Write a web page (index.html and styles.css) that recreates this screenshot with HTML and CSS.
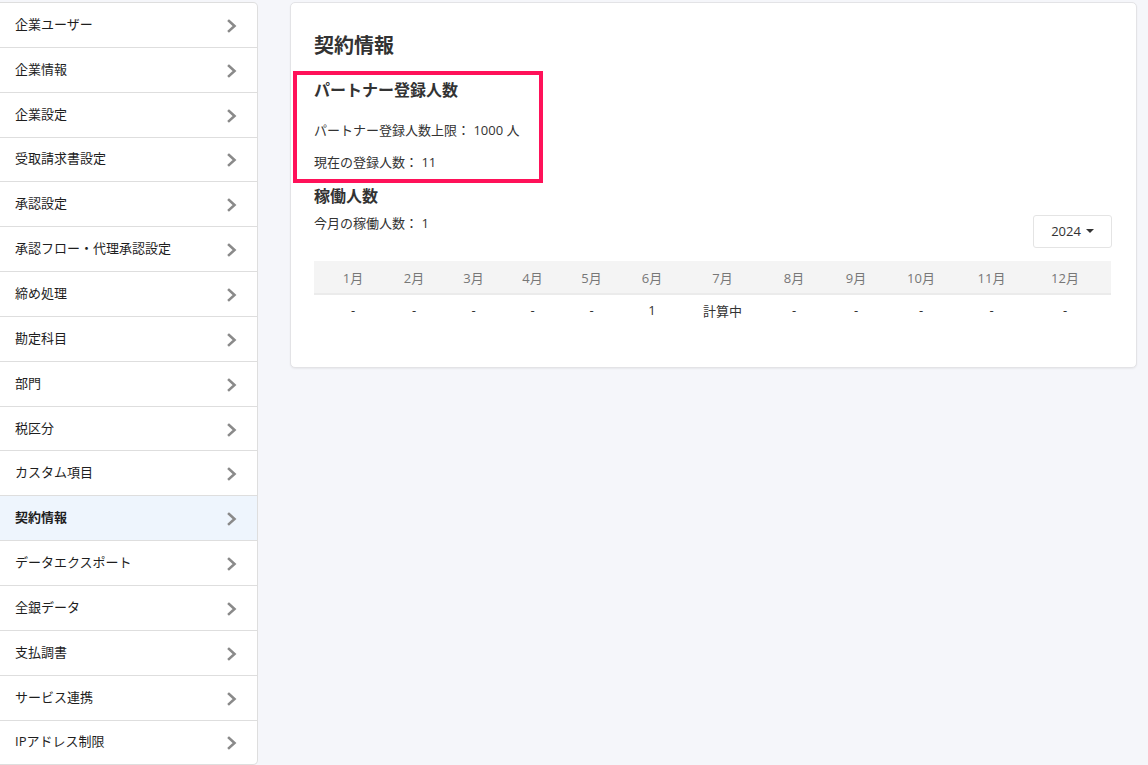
FILE: index.html
```html
<!DOCTYPE html>
<html lang="ja">
<head>
<meta charset="utf-8">
<title>契約情報</title>
<link rel="stylesheet" href="styles.css">
</head>
<body>
<div class="layout">
  <nav class="sidebar">
    <a class="nav-item"><span>企業ユーザー</span><svg class="chev" viewBox="0 0 10 14"><polyline points="2,2 7.5,7 2,12"/></svg></a>
    <a class="nav-item"><span>企業情報</span><svg class="chev" viewBox="0 0 10 14"><polyline points="2,2 7.5,7 2,12"/></svg></a>
    <a class="nav-item"><span>企業設定</span><svg class="chev" viewBox="0 0 10 14"><polyline points="2,2 7.5,7 2,12"/></svg></a>
    <a class="nav-item"><span>受取請求書設定</span><svg class="chev" viewBox="0 0 10 14"><polyline points="2,2 7.5,7 2,12"/></svg></a>
    <a class="nav-item"><span>承認設定</span><svg class="chev" viewBox="0 0 10 14"><polyline points="2,2 7.5,7 2,12"/></svg></a>
    <a class="nav-item"><span>承認フロー・代理承認設定</span><svg class="chev" viewBox="0 0 10 14"><polyline points="2,2 7.5,7 2,12"/></svg></a>
    <a class="nav-item"><span>締め処理</span><svg class="chev" viewBox="0 0 10 14"><polyline points="2,2 7.5,7 2,12"/></svg></a>
    <a class="nav-item"><span>勘定科目</span><svg class="chev" viewBox="0 0 10 14"><polyline points="2,2 7.5,7 2,12"/></svg></a>
    <a class="nav-item"><span>部門</span><svg class="chev" viewBox="0 0 10 14"><polyline points="2,2 7.5,7 2,12"/></svg></a>
    <a class="nav-item"><span>税区分</span><svg class="chev" viewBox="0 0 10 14"><polyline points="2,2 7.5,7 2,12"/></svg></a>
    <a class="nav-item"><span>カスタム項目</span><svg class="chev" viewBox="0 0 10 14"><polyline points="2,2 7.5,7 2,12"/></svg></a>
    <a class="nav-item active"><span>契約情報</span><svg class="chev" viewBox="0 0 10 14"><polyline points="2,2 7.5,7 2,12"/></svg></a>
    <a class="nav-item"><span>データエクスポート</span><svg class="chev" viewBox="0 0 10 14"><polyline points="2,2 7.5,7 2,12"/></svg></a>
    <a class="nav-item"><span>全銀データ</span><svg class="chev" viewBox="0 0 10 14"><polyline points="2,2 7.5,7 2,12"/></svg></a>
    <a class="nav-item"><span>支払調書</span><svg class="chev" viewBox="0 0 10 14"><polyline points="2,2 7.5,7 2,12"/></svg></a>
    <a class="nav-item"><span>サービス連携</span><svg class="chev" viewBox="0 0 10 14"><polyline points="2,2 7.5,7 2,12"/></svg></a>
    <a class="nav-item"><span>IPアドレス制限</span><svg class="chev" viewBox="0 0 10 14"><polyline points="2,2 7.5,7 2,12"/></svg></a>
  </nav>

  <main class="card">
    <h1 class="title">契約情報</h1>
    <section class="partner">
      <h2 class="subtitle">パートナー登録人数</h2>
      <p class="line first">パートナー登録人数上限： 1000 人</p>
      <p class="line second">現在の登録人数： 11</p>
      <div class="highlight"></div>
    </section>
    <section class="active-users">
      <h2 class="subtitle">稼働人数</h2>
      <div class="toolbar">
        <p class="line">今月の稼働人数： 1</p>
        <button class="year-select">2024 <span class="caret"></span></button>
      </div>
      <table class="months">
        <thead>
          <tr><th>1月</th><th>2月</th><th>3月</th><th>4月</th><th>5月</th><th>6月</th><th>7月</th><th>8月</th><th>9月</th><th>10月</th><th>11月</th><th>12月</th></tr>
        </thead>
        <tbody>
          <tr><td>-</td><td>-</td><td>-</td><td>-</td><td>-</td><td>1</td><td>計算中</td><td>-</td><td>-</td><td>-</td><td>-</td><td>-</td></tr>
        </tbody>
      </table>
    </section>
  </main>
</div>
</body>
</html>
```

FILE: styles.css
```css
* { box-sizing: border-box; }

html, body {
  margin: 0;
  padding: 0;
  background: #f5f6fa;
  font-family: "Open Sans", "Noto Sans CJK JP", "Noto Sans", sans-serif;
  color: #333;
}

.layout {
  display: flex;
  align-items: flex-start;
  gap: 32px;
  padding-top: 2px;
}

.sidebar {
  width: 258px;
  flex: none;
  background: #fff;
  border: 1px solid #dedede;
  border-left: none;
  border-radius: 0 5px 5px 0;
  display: flex;
  flex-direction: column;
  overflow: hidden;
}

.nav-item {
  display: flex;
  align-items: center;
  justify-content: space-between;
  height: 44.85px;
  padding: 0 20px 0 15px;
  border-bottom: 1px solid #dedede;
  font-size: 13px;
  line-height: 20px;
  color: #1e1e1e;
  text-decoration: none;
}

.nav-item span { margin-top: -2px; }

.nav-item:last-child { border-bottom: none; height: 43.85px; }

.nav-item.active {
  background: #eef5fd;
  font-weight: 700;
}

.chev {
  width: 10px;
  height: 14px;
  margin-top: 2px;
  fill: none;
  stroke: #8a8a8a;
  stroke-width: 2.6;
  stroke-linecap: square;
  stroke-linejoin: miter;
}

.card {
  width: 847px;
  flex: none;
  background: #fff;
  border: 1px solid #e3e3e6;
  border-radius: 5px;
  box-shadow: 0 1px 2px rgba(0,0,0,0.06);
  padding: 29px 24px 42px 23px;
}

.title {
  margin: 0;
  font-size: 20px;
  line-height: 28px;
  font-weight: 700;
  color: #333;
}

.partner {
  position: relative;
  margin-top: 18px;
}

.subtitle {
  margin: 0;
  font-size: 16px;
  line-height: 24px;
  font-weight: 700;
  color: #333;
}

.line {
  margin: 0;
  font-size: 13px;
  line-height: 20px;
  color: #333;
}

.partner .first { margin-top: 18px; }
.partner .second { margin-top: 12px; }

.highlight {
  position: absolute;
  left: -21px;
  top: -7px;
  width: 250px;
  height: 112px;
  border: 4.5px solid #ff1159;
  pointer-events: none;
}

.active-users { margin-top: 12px; }

.toolbar {
  display: flex;
  justify-content: space-between;
  align-items: flex-start;
  margin-top: 5px;
}

.year-select {
  margin-top: 2px;
  width: 79px;
  height: 33px;
  background: #fff;
  border: 1px solid #e4e4e4;
  border-radius: 3px;
  font-family: "Open Sans", "Noto Sans", sans-serif;
  font-size: 13px;
  color: #333;
  display: flex;
  align-items: center;
  justify-content: center;
  gap: 5px;
  padding: 0 0 1px 0;
}

.caret {
  width: 0;
  height: 0;
  border-left: 4px solid transparent;
  border-right: 4px solid transparent;
  border-top: 4px solid #333;
}

.months {
  width: 797px;
  margin-top: 13px;
  border-collapse: collapse;
  table-layout: fixed;
}

.months th,
.months td {
  text-align: center;
  font-size: 13px;
  padding: 0;
}

.months th {
  height: 33px;
  background: #f4f4f4;
  color: #777;
  font-weight: 400;
  border-bottom: 2px solid #ebebeb;
}

.months td {
  height: 31px;
  color: #333;
}

.months th:nth-child(1)  { width: 70px; padding-left: 8px; }
.months td:nth-child(1)  { padding-left: 8px; }
.months th:nth-child(2)  { width: 60px; }
.months th:nth-child(3)  { width: 59px; }
.months th:nth-child(4)  { width: 59px; }
.months th:nth-child(5)  { width: 59px; }
.months th:nth-child(6)  { width: 65px; padding-right: 3px; }
.months td:nth-child(6)  { padding-right: 3px; }
.months th:nth-child(7)  { width: 73px; }
.months th:nth-child(8)  { width: 66px; padding-left: 4px; }
.months td:nth-child(8)  { padding-left: 4px; }
.months th:nth-child(9)  { width: 62px; }
.months th:nth-child(10) { width: 68px; }
.months th:nth-child(11) { width: 73px; }
.months th:nth-child(12) { width: 83px; padding-right: 9px; }
.months td:nth-child(12) { padding-right: 9px; }
```
